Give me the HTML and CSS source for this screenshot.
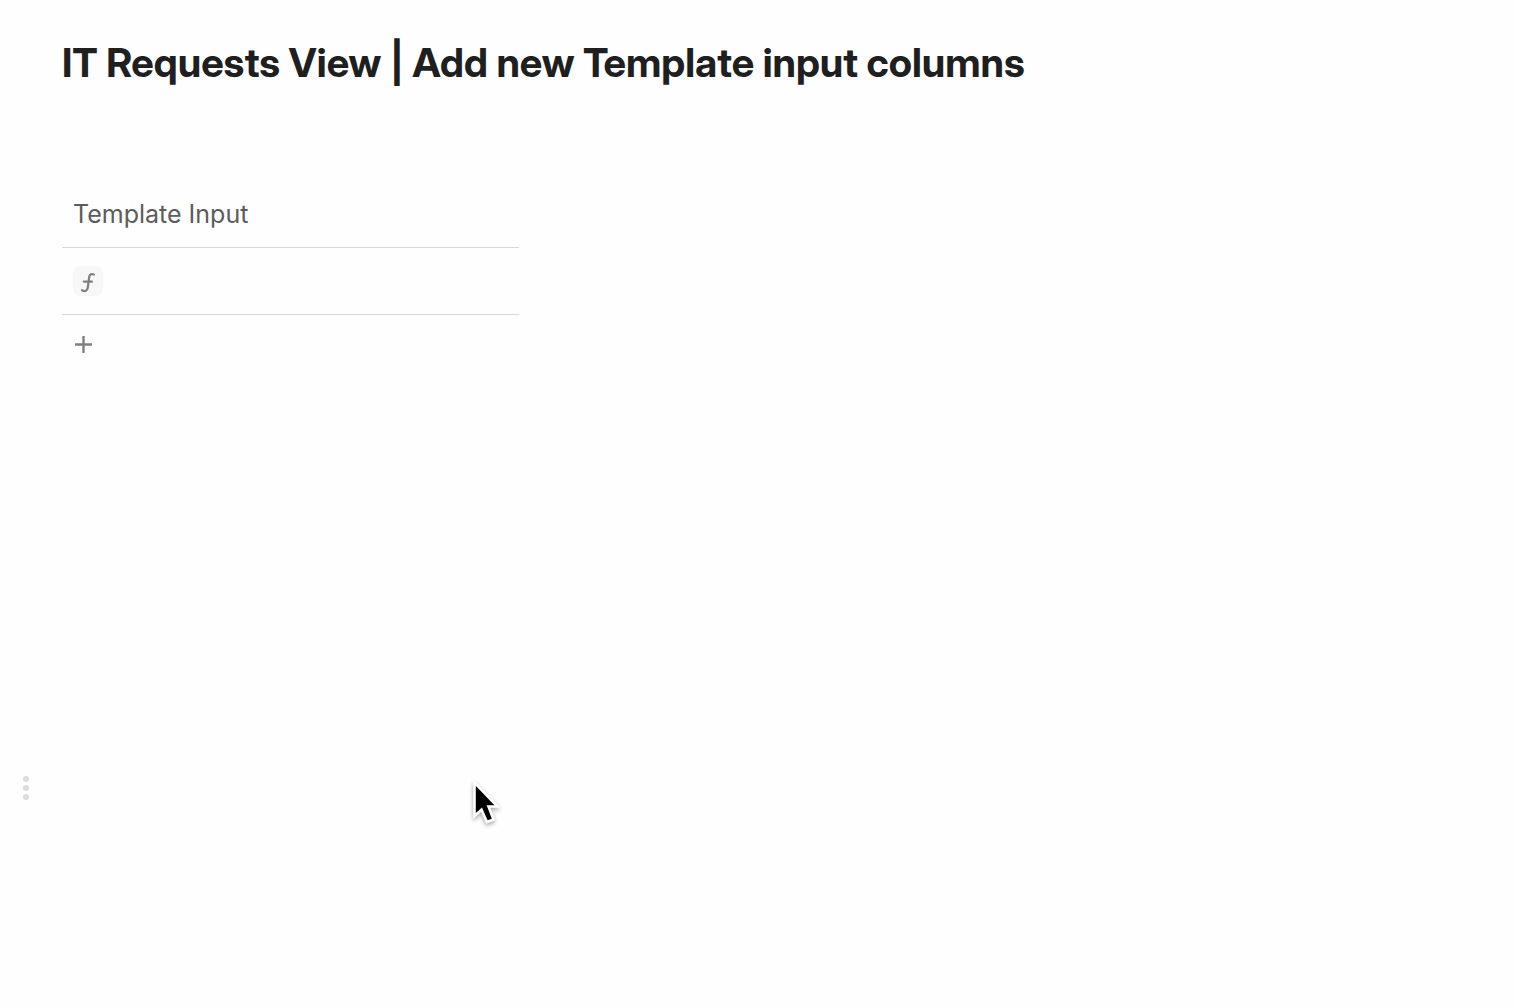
FILE: index.html
```html
<!DOCTYPE html>
<html lang="en">
<head>
<meta charset="utf-8">
<title>IT Requests View</title>
<link rel="stylesheet" href="styles.css">
</head>
<body>
<main class="page">
  <h1 class="title">IT Requests View | Add new Template input columns</h1>
  <table class="grid">
    <thead>
      <tr><th class="heading" scope="col">Template Input</th></tr>
    </thead>
    <tbody>
      <tr>
        <td class="cell">
          <button class="formula" type="button" aria-label="Edit formula">
            <svg width="30" height="30" viewBox="0 0 30 30" fill="none" stroke="currentColor" stroke-width="2.200" stroke-linecap="round" stroke-linejoin="round"><path d="M21 8.600C18.600 7.300 16.700 8.300 16.200 11L14.800 21.500C14.400 24.800 12 26 9 24.200M10.800 15.600H19"/></svg>
          </button>
        </td>
      </tr>
    </tbody>
  </table>
  <button class="add" type="button" aria-label="Add row">
    <svg width="18" height="18" viewBox="0 0 18 18" fill="none" stroke="currentColor" stroke-width="2.400"><path d="M9.500 0V17M1 8.500H18"/></svg>
  </button>
  <button class="handle" type="button" aria-label="Block options">
    <svg width="6" height="24" viewBox="0 0 6 24" fill="currentColor"><circle cx="3" cy="3" r="3"/><circle cx="3" cy="12" r="3"/><circle cx="3" cy="21" r="3"/></svg>
  </button>
  <svg class="pointer" width="32" height="50" viewBox="0 0 32 50" aria-hidden="true"><path d="M3.500 2.500V36L10.500 29.700L16 42L22.500 39.500L17.500 26.500H26.500Z" fill="#000" stroke="#fff" stroke-width="2.600"/></svg>
</main>
</body>
</html>
```
FILE: styles.css
```css
* {
  box-sizing: border-box;
}

body {
  margin: 0;
  background: #fefefe;
  color: #1f1f1f;
  font-family: Inter, "Liberation Sans", sans-serif;
}

.page {
  position: relative;
  min-height: 100vh;
  padding: 38px 62px;
}

.title {
  margin: 0 0 93px;
  font-family: "Inter Display", Inter, "Liberation Sans", sans-serif;
  font-size: 40px;
  line-height: 50px;
  font-weight: 700;
}

.grid {
  width: 457px;
  max-width: 100%;
  border-collapse: collapse;
}

.heading,
.cell {
  padding: 0 11px;
  border-bottom: 1px solid #d8d8d8;
  text-align: left;
}

.heading {
  height: 66px;
  color: #5c5c5c;
  font-size: 25px;
  line-height: 32px;
  font-weight: 400;
}

.cell {
  height: 67px;
}

.formula,
.add,
.handle {
  display: block;
  padding: 0;
  border: 0;
  background: none;
  color: #808080;
}

.formula {
  width: 30px;
  height: 30px;
  border-radius: 7px;
  background: #f7f7f7;
}

.add {
  margin: 21px 12px;
}

.add svg,
.handle svg {
  display: block;
}

.handle {
  position: absolute;
  left: 23px;
  top: 776px;
  color: #dcdcdc;
}

.pointer {
  position: absolute;
  left: 471px;
  top: 780px;
  filter: drop-shadow(0 2px 2px rgba(0, 0, 0, 0.35));
}
```
